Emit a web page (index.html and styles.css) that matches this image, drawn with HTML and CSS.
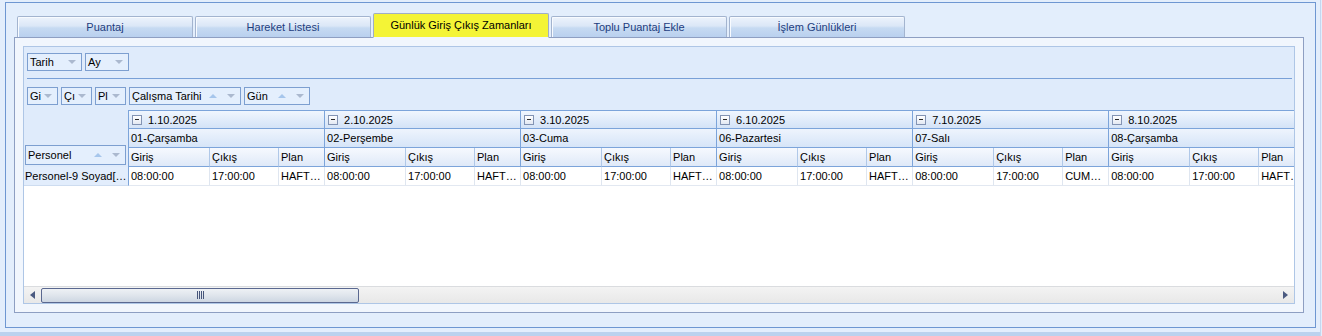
FILE: index.html
```html
<!DOCTYPE html>
<html lang="tr">
<head>
  <meta charset="UTF-8" />
  <title>Günlük Giriş Çıkış Zamanları</title>
  <link rel="stylesheet" href="styles.css">
</head>
<body>
  <div class="screen">
    <div class="frame">

      <!-- Tabs -->
      <div class="tabs">
        <div class="tab">Puantaj</div>
        <div class="tab">Hareket Listesi</div>
        <div class="tab active">Günlük Giriş Çıkış Zamanları</div>
        <div class="tab">Toplu Puantaj Ekle</div>
        <div class="tab">İşlem Günlükleri</div>
      </div>

      <div class="panel">
        <div class="pivot">

          <!-- Filter fields -->
          <div class="field-area top-area">
            <span class="fbtn w-tarih">Tarih <i class="dn"></i></span>
            <span class="fbtn w-ay">Ay <i class="dn"></i></span>
          </div>
          <div class="sep"></div>

          <!-- Data / column fields -->
          <div class="field-area row-area">
            <span class="fbtn w-small">Gi <i class="dn"></i></span>
            <span class="fbtn w-small">Çı <i class="dn"></i></span>
            <span class="fbtn w-small">Pl <i class="dn"></i></span>
            <span class="fbtn w-calisma">Çalışma Tarihi <i class="up"></i><i class="dn"></i></span>
            <span class="fbtn w-gun">Gün <i class="up"></i><i class="dn"></i></span>
          </div>

          <div class="grid-wrap">
            <table class="grid">
              <colgroup>
                <col class="c-rh">
                <col class="c-in"><col class="c-out"><col class="c-plan">
                <col class="c-in"><col class="c-out"><col class="c-plan">
                <col class="c-in"><col class="c-out"><col class="c-plan">
                <col class="c-in"><col class="c-out"><col class="c-plan">
                <col class="c-in"><col class="c-out"><col class="c-plan">
                <col class="c-in"><col class="c-out"><col class="c-plan">
              </colgroup>
              <tr class="r-date">
                <td class="rh-head" rowspan="3">
                  <span class="fbtn w-personel">Personel <i class="up"></i><i class="dn"></i></span>
                </td>
                <td colspan="3"><span class="minus"></span>1.10.2025</td>
                <td colspan="3"><span class="minus"></span>2.10.2025</td>
                <td colspan="3"><span class="minus"></span>3.10.2025</td>
                <td colspan="3"><span class="minus"></span>6.10.2025</td>
                <td colspan="3"><span class="minus"></span>7.10.2025</td>
                <td colspan="3"><span class="minus"></span>8.10.2025</td>
              </tr>
              <tr class="r-day">
                <td colspan="3">01-Çarşamba</td>
                <td colspan="3">02-Perşembe</td>
                <td colspan="3">03-Cuma</td>
                <td colspan="3">06-Pazartesi</td>
                <td colspan="3">07-Salı</td>
                <td colspan="3">08-Çarşamba</td>
              </tr>
              <tr class="r-field">
                <td>Giriş</td><td>Çıkış</td><td class="g-end">Plan</td>
                <td>Giriş</td><td>Çıkış</td><td class="g-end">Plan</td>
                <td>Giriş</td><td>Çıkış</td><td class="g-end">Plan</td>
                <td>Giriş</td><td>Çıkış</td><td class="g-end">Plan</td>
                <td>Giriş</td><td>Çıkış</td><td class="g-end">Plan</td>
                <td>Giriş</td><td>Çıkış</td><td class="g-end">Plan</td>
              </tr>
              <tr class="r-data">
                <td class="rh-cell">Personel-9 Soyad[…</td>
                <td>08:00:00</td><td>17:00:00</td><td>HAFT…</td>
                <td>08:00:00</td><td>17:00:00</td><td>HAFT…</td>
                <td>08:00:00</td><td>17:00:00</td><td>HAFT…</td>
                <td>08:00:00</td><td>17:00:00</td><td>HAFT…</td>
                <td>08:00:00</td><td>17:00:00</td><td>CUM…</td>
                <td>08:00:00</td><td>17:00:00</td><td>HAFT…</td>
              </tr>
            </table>
          </div>

          <div class="blank"></div>

          <!-- Horizontal scrollbar -->
          <div class="hscroll">
            <span class="arrow-btn"><i class="arr-l"></i></span>
            <span class="thumb"><i class="grip"></i></span>
            <span class="arrow-btn right"><i class="arr-r"></i></span>
          </div>

        </div>
      </div>
    </div>
    <div class="strip"></div>
  </div>
</body>
</html>
```

FILE: styles.css
```css
body {
  margin: 0;
  font-family: "Liberation Sans", Arial, sans-serif;
  font-size: 11px;
  color: #000;
  background: #e3eefc;
  width: 1322px;
  height: 336px;
  overflow: hidden;
}

.screen {
  width: 1321px;
  height: 336px;
  border-right: 1px solid #c5d7ef;
  box-sizing: border-box;
  padding-top: 2px;
}

.frame {
  margin-left: 5px;
  width: 1311px;
  height: 326px;
  border: 1px solid #6e97d2;
  box-sizing: border-box;
  padding: 10px 0 0 8px;
}

.strip {
  margin-top: 4px;
  height: 4px;
  background: #bbd2ee;
}

/* Tabs */
.tabs {
  display: flex;
  align-items: flex-end;
  gap: 2px;
  height: 24px;
  padding-left: 3px;
  position: relative;
  z-index: 1;
}

.tab {
  width: 176px;
  height: 21px;
  box-sizing: border-box;
  border: 1px solid #a3b4cf;
  border-bottom: none;
  border-radius: 2px 2px 0 0;
  background: linear-gradient(#edf3fc 0%, #dbe7f7 45%, #c6daf2 55%, #b9d0ee 100%);
  box-shadow: inset 1px 1px 0 #f8fbff;
  color: #1e3d7e;
  text-align: center;
  line-height: 20px;
}

.tab.active {
  height: 25px;
  margin-bottom: -1px;
  background: #f4f436;
  box-shadow: none;
  border-color: #a0aec6;
  color: #000;
  line-height: 22px;
  border-bottom: 1px solid #f1f6fd;
}

.panel {
  width: 1290px;
  height: 276px;
  box-sizing: border-box;
  border: 1px solid #8e9fc2;
  background: #f1f6fd;
  padding: 8px;
}

/* Pivot grid */
.pivot {
  height: 258px;
  box-sizing: border-box;
  border: 1px solid #aec6e6;
  background: #dfebfb;
  display: flex;
  flex-direction: column;
}

.field-area {
  height: 31px;
  box-sizing: border-box;
  display: flex;
  align-items: flex-start;
  gap: 3px;
  padding-left: 3px;
}

.top-area {
  padding-top: 6px;
}

.row-area {
  padding-top: 8px;
}

.sep {
  height: 1px;
  margin: 0 2px 0 3px;
  background: #79a0d7;
}

.fbtn {
  height: 18px;
  box-sizing: border-box;
  border: 1px solid #7d9fd0;
  background: #e4effd;
  display: flex;
  align-items: center;
  padding-left: 2px;
  white-space: nowrap;
}

.w-tarih { width: 55px; }
.w-ay { width: 44px; }
.w-small { width: 31px; }
.w-calisma { width: 112px; }
.w-gun { width: 66px; }
.w-personel { width: 101px; height: 20px; margin-left: 1px; }

.fbtn i {
  display: inline-block;
  width: 0;
  height: 0;
  border-left: 4px solid transparent;
  border-right: 4px solid transparent;
}

.fbtn .dn {
  margin-left: auto;
  margin-right: 5px;
  border-top: 4px solid #abb9cf;
}

.fbtn .up {
  margin-left: auto;
  border-bottom: 4px solid #a6c6ec;
}

.fbtn .up + .dn {
  margin-left: 10px;
}

.grid-wrap {
  overflow: hidden;
  flex: none;
}

.grid {
  table-layout: fixed;
  width: 1281px;
  border-collapse: separate;
  border-spacing: 0;
}

.c-rh { width: 105px; }
.c-in { width: 81px; }
.c-out { width: 69px; }
.c-plan { width: 46px; }

.grid td {
  padding: 0 0 0 2px;
  white-space: nowrap;
  overflow: hidden;
  vertical-align: middle;
}

.r-date { height: 19px; }
.r-day,
.r-field,
.r-data { height: 19px; }

.grid .rh-head {
  vertical-align: bottom;
  padding: 0 0 2px 0;
  border-right: 1px solid #7ca4da;
}

.r-date td:not(.rh-head) {
  border-top: 1px solid #7ca4da;
  border-bottom: 1px solid #7ca4da;
  border-right: 1px solid #7ca4da;
  background: linear-gradient(#f0f6fe, #d4e3f7);
}

.r-day td {
  border-bottom: 1px solid #7ca4da;
  border-right: 1px solid #7ca4da;
  background: linear-gradient(#eef4fd, #d6e5f8);
}

.r-field td {
  border-bottom: 1px solid #7ca4da;
  border-right: 1px solid #b0c8e8;
  background: linear-gradient(#f6f9fe, #dfe9f8);
}

.r-field td.g-end {
  border-right-color: #7ca4da;
}

.r-data td {
  background: #fff;
  border-right: 1px solid #dfe6f0;
  border-bottom: 1px solid #e2e8f1;
}

.r-data td.rh-cell {
  background: #e2edfc;
  border-right: 1px solid #7ca4da;
  border-bottom: 1px solid #cddcf0;
  padding-left: 1px;
}

.minus {
  display: inline-block;
  vertical-align: -1px;
  width: 10px;
  height: 10px;
  box-sizing: border-box;
  border: 1px solid #8394b4;
  background: linear-gradient(#ffffff, #e3e9f3);
  margin: 0 6px 0 1px;
  position: relative;
}

.minus::after {
  content: "";
  position: absolute;
  left: 2px;
  top: 3px;
  width: 4px;
  height: 1px;
  background: #2b2b2b;
}

.blank {
  flex: 1;
  background: #fff;
}

/* Scrollbar */
.hscroll {
  height: 17px;
  box-sizing: border-box;
  border-top: 1px solid #dadcdf;
  background: linear-gradient(#f3f3f3, #e8e8e8);
  display: flex;
  align-items: center;
}

.arrow-btn {
  width: 17px;
  height: 15px;
  display: flex;
  align-items: center;
  justify-content: center;
}

.arrow-btn.right {
  margin-left: auto;
  width: 14px;
  margin-right: 2px;
}

.arr-l,
.arr-r {
  width: 0;
  height: 0;
  border-top: 4px solid transparent;
  border-bottom: 4px solid transparent;
}

.arr-l { border-right: 5px solid #4b5a80; }
.arr-r { border-left: 5px solid #4b5a80; }

.thumb {
  width: 318px;
  height: 15px;
  box-sizing: border-box;
  border: 1px solid #5a6890;
  border-radius: 2px;
  background: linear-gradient(#eef1f5, #dfe5ec 50%, #cdd6e2);
  display: flex;
  align-items: center;
  justify-content: center;
}

.grip {
  width: 7px;
  height: 8px;
  background: repeating-linear-gradient(to right, #46557a 0 1px, transparent 1px 2px);
}
```
